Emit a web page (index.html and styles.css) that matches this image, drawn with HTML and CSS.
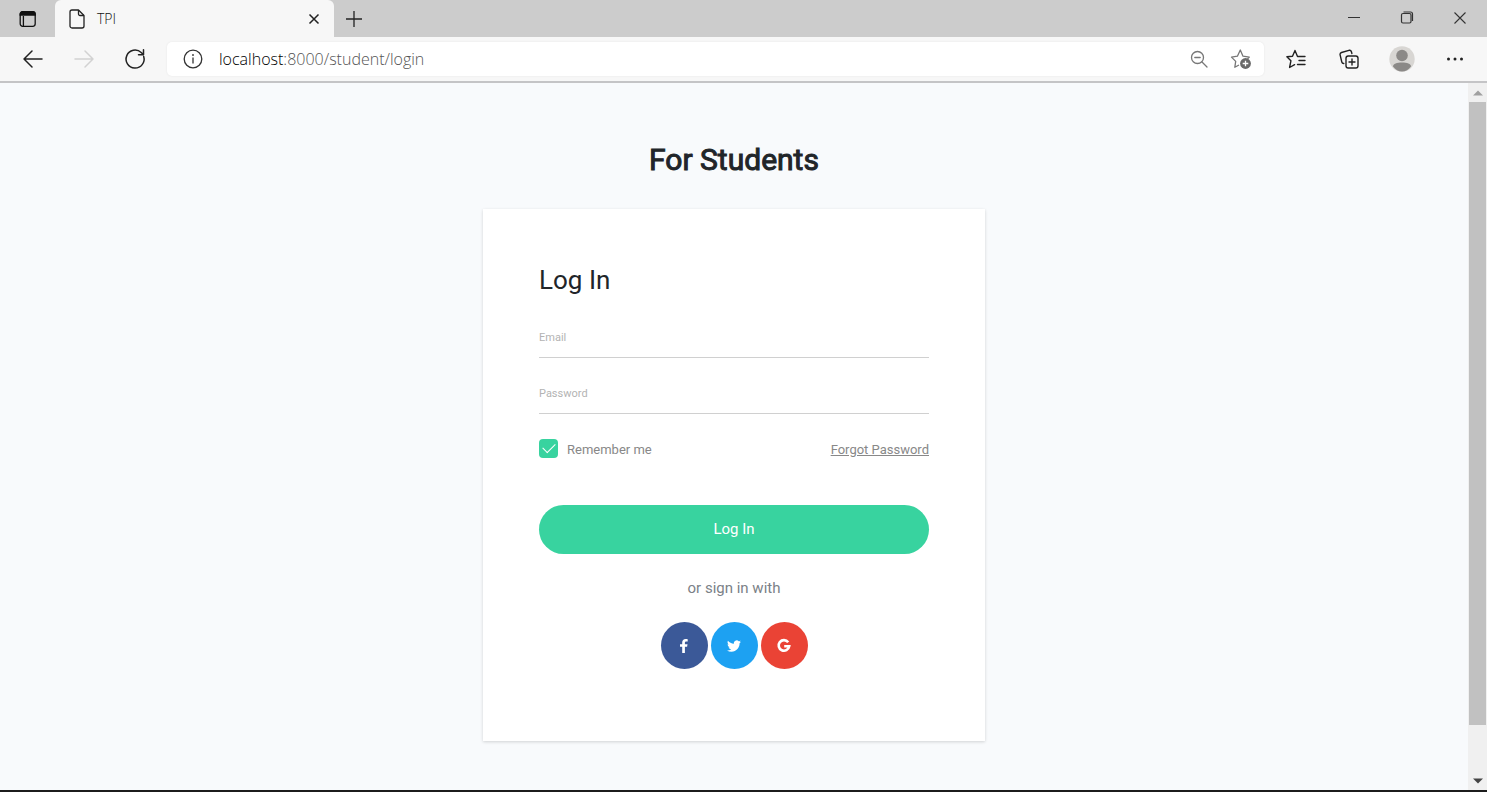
FILE: index.html
```html
<!DOCTYPE html>
<html lang="en">
<head>
<meta charset="utf-8">
<meta name="viewport" content="width=device-width, initial-scale=1">
<title>TPI</title>
<link rel="stylesheet" href="styles.css">
</head>
<body>
<div class="window">
  <header class="titlebar">
    <button class="tab-actions" aria-label="Tab actions">
      <svg width="18" height="18" viewBox="0 0 18 18" fill="none" stroke="#111" stroke-width="1.3"><rect x="1.2" y="1.7" width="15" height="14.6" rx="2.5"/><path d="M1.2 5V4.2a2.5 2.5 0 0 1 2.5-2.5h10a2.5 2.5 0 0 1 2.5 2.5V5z" fill="#111"/><path d="M4.4 6v10"/></svg>
    </button>
    <div class="tab">
      <svg width="16" height="20" viewBox="0 0 16 20" fill="none" stroke="#222" stroke-width="1.3" stroke-linejoin="round"><path d="M3 1h6.5L15 6.500V17a2 2 0 0 1-2 2H3a2 2 0 0 1-2-2V3a2 2 0 0 1 2-2z"/><path d="M9.500 1v4a1.500 1.500 0 0 0 1.500 1.500h4"/></svg>
      <span class="tab-title">TPI</span>
      <button class="tab-close" aria-label="Close tab">
        <svg width="12" height="12" viewBox="0 0 12 12" stroke="#222" stroke-width="1.5"><path d="M1.500 1.500l9 9M10.500 1.500l-9 9"/></svg>
      </button>
    </div>
    <button class="new-tab" aria-label="New tab">
      <svg width="18" height="18" viewBox="0 0 18 18" stroke="#222" stroke-width="1.3"><path d="M9 1v16M1 9h16"/></svg>
    </button>
    <div class="window-controls">
      <button aria-label="Minimize"><svg width="14" height="14" viewBox="0 0 14 14" stroke="#333"><path d="M1 6.500h12"/></svg></button>
      <button aria-label="Restore"><svg width="14" height="14" viewBox="0 0 14 14" fill="none" stroke="#333" stroke-width="1.200"><rect x="1.500" y="2.500" width="9.500" height="9.500" rx="1.500"/><path d="M3.500 1h7a2 2 0 0 1 2 2V10"/></svg></button>
      <button aria-label="Close"><svg width="14" height="14" viewBox="0 0 14 14" stroke="#333" stroke-width="1.100"><path d="M1.500 1.500l11 11M12.500 1.500l-11 11"/></svg></button>
    </div>
  </header>

  <nav class="toolbar" aria-label="Browser toolbar">
    <div class="nav-buttons">
      <button aria-label="Back"><svg width="22" height="20" viewBox="0 0 22 20" fill="none" stroke="#222" stroke-width="1.500" stroke-linecap="round" stroke-linejoin="round"><path d="M10 2L2 10l8 8M2 10h18"/></svg></button>
      <button aria-label="Forward" disabled><svg width="22" height="20" viewBox="0 0 22 20" fill="none" stroke="#d2d2d2" stroke-width="1.500" stroke-linecap="round" stroke-linejoin="round"><path d="M12 2l8 8-8 8M20 10H2"/></svg></button>
      <button aria-label="Refresh"><svg width="22" height="22" viewBox="0 0 22 22" fill="none" stroke="#222" stroke-width="1.500" stroke-linecap="round" stroke-linejoin="round"><path d="M19.700 8.500A9 9 0 1 1 17.200 4.500L19 6.300M19.500 1.800v4.900h-5"/></svg></button>
    </div>
    <div class="address">
      <svg width="20" height="20" viewBox="0 0 20 20" fill="none" stroke="#333" stroke-width="1.300"><circle cx="10" cy="10" r="8.800"/><path d="M10 8.500v6"/><circle cx="10" cy="6" r=".6" fill="#333" stroke-width=".8"/></svg>
      <span class="url">localhost<span class="url-rest">:8000/student/login</span></span>
      <button aria-label="Zoom"><svg width="18" height="18" viewBox="0 0 18 18" fill="none" stroke="#777" stroke-width="1.300" stroke-linecap="round"><circle cx="7.500" cy="7.500" r="6"/><path d="M12 12l5 5M4.800 7.500h5.400"/></svg></button>
      <button class="favorite" aria-label="Add to favorites"><svg width="22" height="22" viewBox="0 0 22 22" fill="none" stroke="#777" stroke-width="1.300" stroke-linejoin="round"><path d="M9 17l-4.200 2.300.9-5.900L1.500 9.100l5.900-.9L10.300 2l2.700 6.200 6.300.9-1.800 1.900"/><circle cx="15.500" cy="15.500" r="5.400" fill="#6a6a6a" stroke="none"/><path d="M15.500 12.700v5.600M12.700 15.500h5.600" stroke="#fff"/></svg></button>
    </div>
    <div class="browser-actions">
      <button aria-label="Favorites"><svg width="20" height="20" viewBox="0 0 20 20" fill="none" stroke="#222" stroke-width="1.400" stroke-linejoin="round" stroke-linecap="round"><path d="M19 7.500h-7.500L9 1.500 6.500 7.200l-5.600.5 4 4.100-1.300 6.700 5-2.800M13 11.500h6M11.500 15.500h7.500"/></svg></button>
      <button aria-label="Collections"><svg width="20" height="20" viewBox="0 0 20 20" fill="none" stroke="#222" stroke-width="1.400" stroke-linejoin="round" stroke-linecap="round"><rect x="7" y="7" width="12" height="12" rx="2.200"/><path d="M13 10v6M10 13h6M4.800 14.500a2 2 0 0 1-2-1.500L1.100 5.800a2 2 0 0 1 1.400-2.300L10 1.300a2 2 0 0 1 2.400 1.400l.5 1.800"/></svg></button>
      <button aria-label="Profile"><svg width="26" height="26" viewBox="0 0 26 26"><circle cx="13" cy="13" r="12.700" fill="#d8d6d3"/><circle cx="13" cy="9.500" r="5.800" fill="#8b8987"/><path d="M4 20.500c0-2.800 4-4 9-4s9 1.200 9 4c-2.200 3-5.500 5-9 5s-6.800-2-9-5z" fill="#8b8987"/></svg></button>
      <button aria-label="Settings and more"><svg width="18" height="6" viewBox="0 0 18 6" fill="#222"><circle cx="2.500" cy="3" r="1.500"/><circle cx="9" cy="3" r="1.500"/><circle cx="15.500" cy="3" r="1.500"/></svg></button>
    </div>
  </nav>

  <div class="viewport">
    <main class="page">
      <h1 class="page-title">For Students</h1>
      <form class="card">
        <h2 class="card-title">Log In</h2>
        <div class="field">
          <label for="email">Email</label>
          <input id="email" type="email">
        </div>
        <div class="field">
          <label for="password">Password</label>
          <input id="password" type="password">
        </div>
        <div class="options">
          <label class="remember"><input type="checkbox" class="check" checked>Remember me</label>
          <a class="forgot" href="#">Forgot Password</a>
        </div>
        <button class="submit" type="button">Log In</button>
        <p class="alternative">or sign in with</p>
        <div class="social">
          <a class="social-link facebook" href="#" aria-label="Facebook"><svg width="16" height="16" viewBox="0 0 16 16" fill="#fff"><path d="M6.200 15V8.800H4V6.300h2.200V4.500C6.200 2.200 7.500 1 9.600 1c.9 0 1.700.1 2.100.2v2.300h-1.400c-1.100 0-1.400.6-1.400 1.300v1.500h2.600l-.4 2.500H8.900V15z"/></svg></a>
          <a class="social-link twitter" href="#" aria-label="Twitter"><svg width="14" height="14" viewBox="0 0 24 24" fill="#fff"><path d="M23.950 4.570a10 10 0 0 1-2.820.77 4.960 4.960 0 0 0 2.160-2.720c-.95.550-2 .95-3.130 1.180a4.920 4.920 0 0 0-8.380 4.480C7.690 8.090 4.070 6.130 1.640 3.160a4.900 4.900 0 0 0-.67 2.480c0 1.710.87 3.210 2.190 4.100a4.900 4.900 0 0 1-2.230-.62v.06a4.920 4.920 0 0 0 3.950 4.830 5 5 0 0 1-2.210.08 4.940 4.940 0 0 0 4.600 3.420A9.870 9.870 0 0 1 0 19.540a13.990 13.990 0 0 0 7.550 2.210c9.050 0 14-7.500 14-13.980 0-.21 0-.42-.02-.63a9.940 9.940 0 0 0 2.460-2.550z"/></svg></a>
          <a class="social-link google" href="#" aria-label="Google"><svg width="16" height="16" viewBox="0 0 16 16" fill="none" stroke="#fff" stroke-width="2.600"><path d="M12.200 4.200A5.300 5.300 0 1 0 13.200 8.300H8.200"/></svg></a>
        </div>
      </form>
    </main>
    <div class="scrollbar" aria-hidden="true">
      <svg width="10" height="6" viewBox="0 0 10 6"><path d="M0 5.500l5-5 5 5z" fill="#a0a0a0"/></svg>
      <div class="scroll-track"><div class="scroll-thumb"></div></div>
      <svg width="10" height="6" viewBox="0 0 10 6"><path d="M0 .5l5 5 5-5z" fill="#444"/></svg>
    </div>
  </div>
</div>
</body>
</html>
```
FILE: styles.css
```css
* { box-sizing: border-box; }

body {
  margin: 0;
  font-family: Roboto, "Liberation Sans", sans-serif;
  color: #212529;
}

button {
  padding: 0;
  border: 0;
  background: none;
  font: inherit;
}

svg { display: block; flex: none; }

.window {
  display: flex;
  flex-direction: column;
  height: 100vh;
  border-bottom: 2px solid #1c1c1c;
}

/* Title bar */
.titlebar {
  display: flex;
  align-items: stretch;
  flex: none;
  height: 37px;
  background: #cccccc;
}

.titlebar button {
  display: flex;
  align-items: center;
  justify-content: center;
}

.tab-actions { width: 55px; }

.tab {
  display: flex;
  align-items: center;
  width: 279px;
  padding: 0 14px;
  border-radius: 6px 6px 0 0;
  background: #f7f7f7;
}

.tab-title {
  flex: 1;
  margin-left: 12px;
  font: 300 14px/18px "Open Sans", "Noto Sans", sans-serif;
  color: #111;
}

.new-tab { width: 40px; }

.window-controls {
  display: flex;
  margin-left: auto;
  padding: 0 1px 1px 0;
}

.window-controls button { width: 53px; }

/* Toolbar */
.toolbar {
  display: flex;
  align-items: center;
  flex: none;
  height: 46px;
  border-bottom: 2px solid #c4c4c6;
  background: #f7f7f7;
}

.nav-buttons,
.browser-actions {
  display: flex;
  align-items: center;
}

.nav-buttons { padding: 0 7px; }

.nav-buttons button,
.browser-actions button {
  display: flex;
  justify-content: center;
  width: 51px;
}

.browser-actions { padding: 0 6px 0 5px; }
.browser-actions button { width: 53px; }

.address {
  display: flex;
  align-items: center;
  flex: 1;
  height: 34px;
  padding: 0 12px 0 16px;
  border-radius: 5px;
  background: #fff;
  box-shadow: 0 0 2px #e4e4e4;
}

.url {
  flex: 1;
  margin-left: 16px;
  font: 300 16px/24px "Open Sans", "Noto Sans", sans-serif;
  color: #000;
}

.url-rest { color: #555; }

.favorite { margin-left: 22px; }

/* Page */
.viewport {
  display: flex;
  flex: 1;
  min-height: 0;
}

.page {
  flex: 1;
  padding: 56px 16px 0;
  overflow: hidden;
  background: #f8fafc;
}

.page-title {
  margin: 0;
  font-size: 30px;
  font-weight: 400;
  line-height: 42px;
  text-align: center;
  -webkit-text-stroke: 1px #212529;
}

.card {
  max-width: 502px;
  margin: 28px auto 0;
  padding: 56px 56px 72px;
  background: #fff;
  box-shadow: 0 1px 3px rgba(0, 0, 0, 0.16);
}

.card-title {
  margin: 0 0 35px;
  font-size: 26px;
  font-weight: 400;
  line-height: 30px;
}

.field {
  display: flex;
  flex-direction: column;
  height: 28px;
  margin-bottom: 28px;
}

.field label {
  font-size: 11px;
  line-height: 16px;
  color: #b3b3b3;
}

.field input {
  width: 100%;
  height: 12px;
  padding: 0;
  border: 0;
  border-bottom: 1px solid #d0d0d0;
  background: none;
  font: 11px/11px Roboto, sans-serif;
  outline: none;
}

.field + .options { margin-top: -3px; }

.options {
  display: flex;
  align-items: center;
  justify-content: space-between;
  margin-bottom: 44px;
  font-size: 13px;
  line-height: 22px;
  color: #888;
}

.remember {
  display: flex;
  align-items: flex-start;
  gap: 9px;
}

.check {
  display: grid;
  place-items: center;
  appearance: none;
  width: 19px;
  height: 19px;
  margin: 0;
  border-radius: 4px;
  background: #38d39f;
}

.check:checked::before {
  content: "";
  width: 11px;
  height: 6px;
  margin-bottom: 4px;
  border: solid #fff;
  border-width: 0 0 1px 1px;
  transform: rotate(-45deg);
}

.forgot { color: #888; }

.submit {
  display: block;
  width: 100%;
  height: 49px;
  padding-bottom: 1px;
  border-radius: 25px;
  background: #38d39f;
  font-size: 15px;
  color: #fff;
}

.alternative {
  margin: 22px 0;
  font-size: 15px;
  line-height: 24px;
  text-align: center;
  color: #7b8187;
}

.social {
  display: flex;
  justify-content: center;
  gap: 3px;
}

.social-link {
  display: flex;
  align-items: center;
  justify-content: center;
  width: 47px;
  height: 47px;
  border-radius: 50%;
}

.facebook { background: #3b5998; }
.twitter { background: #1da1f2; }
.google { background: #ea4335; }

/* Scrollbar */
.scrollbar {
  display: flex;
  flex-direction: column;
  align-items: center;
  width: 19px;
  padding: 7px 1px 6px;
  background: #f0f0f0;
}

.scroll-track {
  flex: 1;
  width: 100%;
  padding: 6px 0;
}

.scroll-thumb {
  width: 100%;
  height: 93%;
  background: #c1c1c1;
}
```
